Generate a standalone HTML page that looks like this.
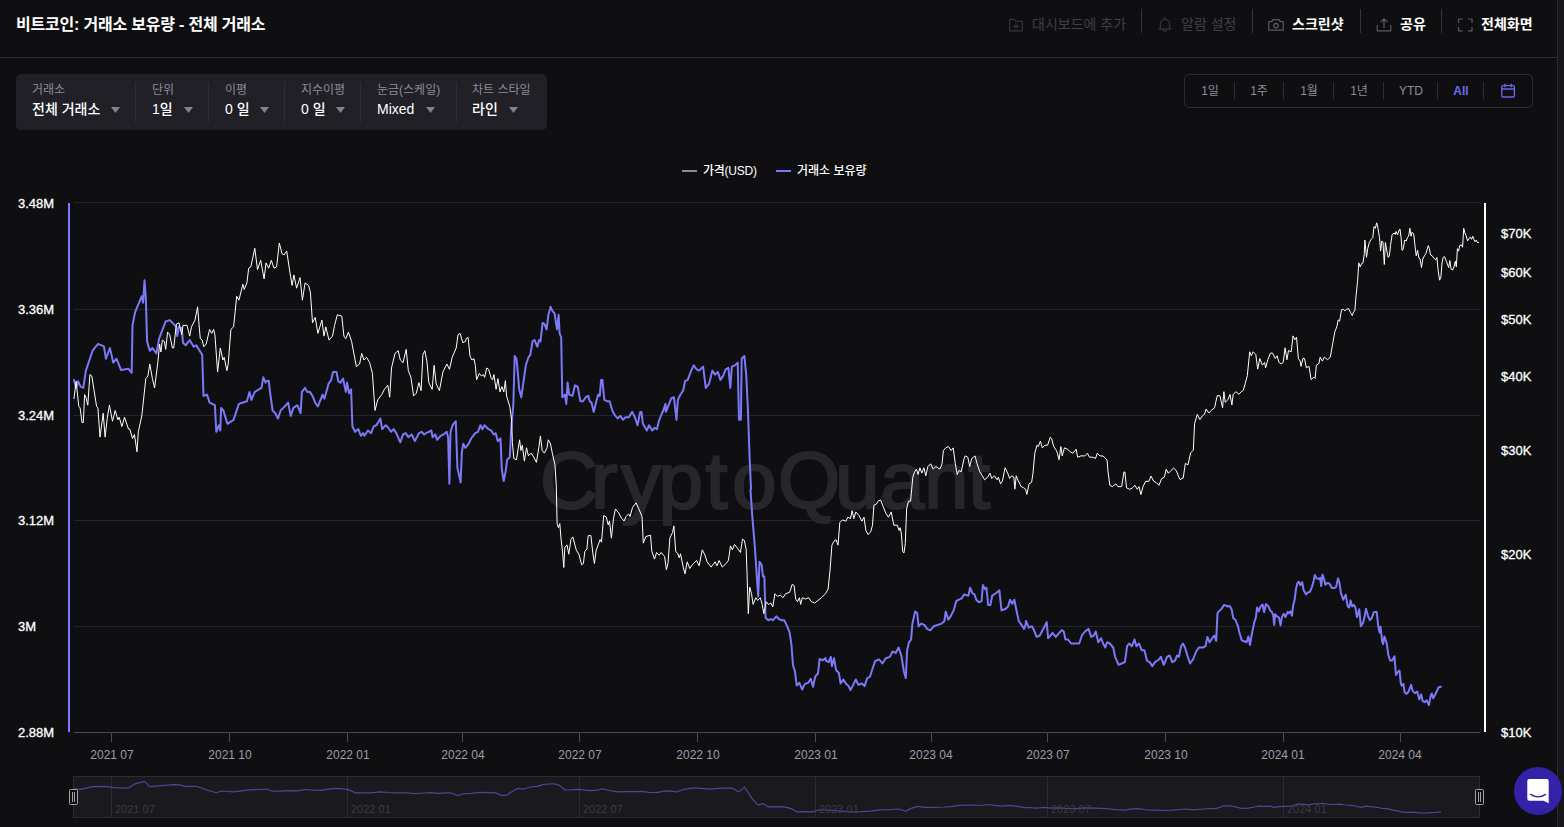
<!DOCTYPE html>
<html lang="ko">
<head>
<meta charset="utf-8">
<title>비트코인: 거래소 보유량 - 전체 거래소</title>
<style>
*{box-sizing:border-box;margin:0;padding:0}
html,body{width:1564px;height:827px;overflow:hidden;background:#0f0f12}
body{position:relative;font-family:"Liberation Sans","Noto Sans CJK KR",sans-serif;color:#fff;font-size:14px}
.abs{position:absolute}
.vscroll{left:1557px;top:0;width:7px;height:827px;background:#17171b;border-left:1px solid #2b2b33}
.hdr-line{left:0;top:57px;width:1557px;height:1px;background:#2c2c34}
.title{left:16px;top:13px;height:24px;line-height:24px;font-size:16px;font-weight:700;color:#fff;white-space:nowrap;letter-spacing:-0.2px}
.act{top:12px;height:24px;line-height:24px;font-size:14px;white-space:nowrap}
.act.dim{color:#3f3f49}
.act.on{color:#fff;font-weight:700}
.vsep{top:9px;width:1px;height:24px;background:#34343d}
.fbox{left:16px;top:74px;width:531px;height:56px;background:#202026;border-radius:5px}
.fl{top:82px;height:16px;line-height:16px;font-size:12px;color:#8c8c9a;white-space:nowrap}
.fv{top:99px;height:20px;line-height:20px;font-size:14px;color:#fff;white-space:nowrap;font-weight:500}
.fsep{top:82px;width:1px;height:40px;background:#2e2e37}
.car{top:107px;width:9px;height:6px;background:#82828f;clip-path:polygon(0 0,100% 0,50% 100%);margin-left:1px}
.tbox{left:1184px;top:74px;width:349px;height:34px;border:1px solid #2c2c34;border-radius:5px}
.tb{top:81px;height:20px;line-height:20px;font-size:12px;color:#8c8c9a;white-space:nowrap;text-align:center}
.tsep{top:82px;width:1px;height:17px;background:#2e2e37}
.yl{-webkit-text-stroke:0.3px #fff;left:18px;width:50px;height:16px;line-height:16px;font-size:13px;color:#fff;white-space:nowrap}
.yr{-webkit-text-stroke:0.3px #fff;left:1501px;width:50px;height:16px;line-height:16px;font-size:13px;color:#fff;white-space:nowrap}
.xl{top:747px;width:80px;height:16px;line-height:16px;font-size:12px;color:#9d9da9;text-align:center;white-space:nowrap}
.lg{top:163px;height:16px;line-height:16px;font-size:12px;color:#fff;white-space:nowrap;font-weight:500;letter-spacing:-0.25px}
.nl{top:802px;height:14px;line-height:14px;font-size:11px;color:#3c3c46;white-space:nowrap}
</style>
</head>
<body>
<div class="abs vscroll"></div>
<div class="abs hdr-line"></div>
<div class="abs title">비트코인: 거래소 보유량 - 전체 거래소</div>

<!-- header actions -->
<div class="abs act dim" style="left:1032px">대시보드에 추가</div>
<div class="abs vsep" style="left:1141px"></div>
<div class="abs act dim" style="left:1181px">알람 설정</div>
<div class="abs vsep" style="left:1252px"></div>
<div class="abs act on" style="left:1292px">스크린샷</div>
<div class="abs vsep" style="left:1360px"></div>
<div class="abs act on" style="left:1400px">공유</div>
<div class="abs vsep" style="left:1441px"></div>
<div class="abs act on" style="left:1481px">전체화면</div>

<!-- filter box -->
<div class="abs fbox"></div>
<div class="abs fl" style="left:32px">거래소</div><div class="abs fv" style="left:32px">전체 거래소</div><div class="abs car" style="left:110px"></div>
<div class="abs fsep" style="left:135px"></div>
<div class="abs fl" style="left:152px">단위</div><div class="abs fv" style="left:152px">1일</div><div class="abs car" style="left:183px"></div>
<div class="abs fsep" style="left:208px"></div>
<div class="abs fl" style="left:225px">이평</div><div class="abs fv" style="left:225px">0 일</div><div class="abs car" style="left:259px"></div>
<div class="abs fsep" style="left:284px"></div>
<div class="abs fl" style="left:301px">지수이평</div><div class="abs fv" style="left:301px">0 일</div><div class="abs car" style="left:335px"></div>
<div class="abs fsep" style="left:360px"></div>
<div class="abs fl" style="left:377px">눈금(스케일)</div><div class="abs fv" style="left:377px">Mixed</div><div class="abs car" style="left:425px"></div>
<div class="abs fsep" style="left:456px"></div>
<div class="abs fl" style="left:472px">차트 스타일</div><div class="abs fv" style="left:472px">라인</div><div class="abs car" style="left:508px"></div>

<!-- time range box -->
<div class="abs tbox"></div>
<div class="abs tb" style="left:1190px;width:40px">1일</div>
<div class="abs tsep" style="left:1234px"></div>
<div class="abs tb" style="left:1239px;width:40px">1주</div>
<div class="abs tsep" style="left:1283px"></div>
<div class="abs tb" style="left:1289px;width:40px">1월</div>
<div class="abs tsep" style="left:1333px"></div>
<div class="abs tb" style="left:1339px;width:40px">1년</div>
<div class="abs tsep" style="left:1383px"></div>
<div class="abs tb" style="left:1391px;width:40px">YTD</div>
<div class="abs tsep" style="left:1437px"></div>
<div class="abs tb" style="left:1441px;width:40px;color:#6b6bf5;font-weight:700">All</div>
<div class="abs tsep" style="left:1483px"></div>

<!-- legend -->
<div class="abs" style="left:682px;top:170px;width:15px;height:2px;background:#8d8d8d"></div>
<div class="abs lg" style="left:703px">가격(USD)</div>
<div class="abs" style="left:776px;top:170px;width:15px;height:2px;background:#7b79f7"></div>
<div class="abs lg" style="left:797px;letter-spacing:0">거래소 보유량</div>

<!-- y labels -->
<div class="abs yl" style="top:196px">3.48M</div>
<div class="abs yl" style="top:302px">3.36M</div>
<div class="abs yl" style="top:408px">3.24M</div>
<div class="abs yl" style="top:513px">3.12M</div>
<div class="abs yl" style="top:619px">3M</div>
<div class="abs yl" style="top:725px">2.88M</div>
<div class="abs yr" style="top:226px">$70K</div>
<div class="abs yr" style="top:265px">$60K</div>
<div class="abs yr" style="top:312px">$50K</div>
<div class="abs yr" style="top:369px">$40K</div>
<div class="abs yr" style="top:443px">$30K</div>
<div class="abs yr" style="top:547px">$20K</div>
<div class="abs yr" style="top:725px">$10K</div>

<!-- x labels -->
<div class="abs xl" style="left:72px">2021 07</div>
<div class="abs xl" style="left:190px">2021 10</div>
<div class="abs xl" style="left:308px">2022 01</div>
<div class="abs xl" style="left:423px">2022 04</div>
<div class="abs xl" style="left:540px">2022 07</div>
<div class="abs xl" style="left:658px">2022 10</div>
<div class="abs xl" style="left:776px">2023 01</div>
<div class="abs xl" style="left:891px">2023 04</div>
<div class="abs xl" style="left:1008px">2023 07</div>
<div class="abs xl" style="left:1126px">2023 10</div>
<div class="abs xl" style="left:1243px">2024 01</div>
<div class="abs xl" style="left:1360px">2024 04</div>

<!-- chart svg -->
<svg class="abs" style="left:0;top:0" width="1564" height="827" viewBox="0 0 1564 827" fill="none">
<g id="grid" stroke="#222228" stroke-width="1" shape-rendering="crispEdges">
<path d="M74 202.5H1480M74 309.5H1480M74 415.5H1480M74 520.5H1480M74 626.5H1480"/>
</g>
<path id="xticks" d="M111.5 733V742M229.5 733V742M347.5 733V742M462.5 733V742M579.5 733V742M697.5 733V742M815.5 733V742M931.5 733V742M1047.5 733V742M1165.5 733V742M1283.5 733V742M1400.5 733V742" stroke="#4a4a55" stroke-width="1" shape-rendering="crispEdges"/>
<path id="xaxis" d="M74 732.5H1480" stroke="#4a4a55" stroke-width="1" shape-rendering="crispEdges"/>
<rect x="68" y="203" width="2" height="529" fill="#7d7bfa"/>
<rect x="1484" y="203" width="2" height="529" fill="#ffffff"/>
<text id="wm" x="540 591 621 658.5 705.5 732 778 835 880 924 968" y="507.5" font-family="Liberation Sans, sans-serif" font-size="80" fill="#26262c" stroke="#26262c" stroke-width="2.2" stroke-linejoin="round">CryptoQuant</text>
<path id="reserve" d="M74 379.9L76.1 387.9L78 381.3L80.6 386.6L83.3 387.9L85.9 370.6L92.6 350.7L97.9 344L101.9 345.4L104 346.7L105.9 358.7L109.9 348L113.3 362.7L116.5 358.7L121.1 370.1L128.5 368.8L131.7 372.8L132.5 325.4L135.1 312.1L141.8 296.2L143.1 302.8L144.5 280.2L145.8 297.5L147.1 341.4L149.8 350.7L152.4 348L156.4 353.4L159.1 338.7L165.7 321.4L169.7 320.1L173.7 324.1L176.4 326.8L177.2 336.1L179 326.8L181.7 328.1L183 342.7L185.7 345.4L189.7 340.1L193.7 346.7L196.3 345.4L202.2 354.7L203.5 395.9L207 394.6L209.6 402.6L214.9 405.2L216.3 431.8L218.9 425.2L220.3 430.5L221.1 407.9L223.4 410.5L227.4 423.8L233.6 419.8L238.9 403.9L246.9 401.2L249.5 391.9L251.4 399.9L254.8 391.9L261.5 387.9L263.3 377.3L265.5 382.6L266 381.3L268.7 380.7L270 391.9L272.6 410.5L275.3 413.2L278 418.5L280.6 410.5L283.3 407.9L285.9 405.2L288.1 402.6L290.7 415.9L293.4 407.9L297.4 405.2L300.6 413.2L301.9 391.9L305.1 387.9L307.2 391.9L309.9 391.9L312.5 395.9L315.2 402.6L317.9 406.5L320.5 399.9L322.6 394.6L324.5 398.6L328.5 383.9L331.2 379.9L333 372L336.5 372L338.3 381.3L340.5 382.6L343.1 378.6L345.8 391.9L347.1 382.6L349 393.2L351.1 389.3L352.4 426.5L355.1 431.8L358.3 429.1L360.9 435.8L363.1 433.1L364.4 435.8L367.9 430.5L371.1 433.1L373.7 426.5L376.4 425.2L380.4 418.5L382.2 429.1L385.7 425.2L388.3 427.8L391 431.8L393.7 429.1L396.3 433.1L400.3 442.4L403 434.5L405.6 433.1L408.3 437.1L411.7 434.5L414.9 441.1L418.9 433.1L421.6 431.8L424.2 434.5L426 433.2L428.7 431.9L431.3 430.5L432.6 437.2L435.3 434.5L437.2 439.8L440.6 435.9L443.3 434.5L446.7 431.9L448.1 437.2L449.4 483.7L450.5 431.9L452.6 425.2L455.8 421.2L457.4 467.8L460.6 482.4L461.9 451.8L463.2 443.8L465.4 447.8L468.6 443.8L471.2 438.5L475.2 433.2L477.9 431.9L480.5 425.2L482.4 429.2L484.5 425.2L488.5 429.2L491.2 430.5L493.8 434.5L495.7 433.2L497.8 441.2L500.5 438.5L501.8 469.1L503.7 481.1L505.8 470.4L507.1 459.8L509.8 457.1L511.2 429.1L513.3 405.2L514.7 356L516.5 358.7L517.9 373.3L519.2 389.3L521.3 397.2L523.2 383.9L525.8 365.3L528.5 357.3L530.4 354.7L532.5 341.4L534.6 340.1L537.3 346.7L539.1 340.1L540.5 341.4L542.6 322.8L544.5 324.1L546.6 329.4L548.4 314.8L550.6 306.8L552.4 310.8L554.6 313.5L557 329.4L558.6 314.8L559.6 333.4L561.2 337.4L562.3 397.2L564.9 394.6L566.3 403.9L567.6 382.6L569.2 394.6L572.4 395.9L575 385.3L577.7 386.6L580.4 401.2L583 401.2L585.7 397.2L588.3 395.9L589.7 401.2L591.5 402.6L593.7 411.9L596.3 401.2L598.2 394.6L599.8 395.9L601.1 379.9L602.4 379.9L604.3 399.9L607 401.2L609.6 401.2L612.3 410.5L614.4 414.5L617.6 418.5L620.3 415.9L622.9 419.8L625.6 417.2L628.8 417.2L632.2 411.9L634.9 417.2L637.5 425.2L640.2 411.9L641.5 411.9L642.9 423.8L646.9 430.5L649 425.2L652.2 430.5L654.8 427.8L657 429.1L658.8 421.2L661.5 414.5L663.3 410.5L665.5 403.9L665.9 411.8L668.6 405.2L671.2 398.5L673.9 397.2L676.5 419.8L677.9 399.8L680.5 394.5L683.2 390.5L685 381.2L687.7 379.9L691.2 370.6L693.8 365.3L696.5 369.3L699.1 370.6L703.1 366.6L705.8 387.9L709 383.9L712.4 370.6L715.1 374.6L717.8 371.9L720.4 379.9L723.1 375.9L725.7 369.3L728.4 367.9L730.3 387.9L731.9 366.6L735 365.3L737.7 362.6L739 419.8L740.9 419.8L741.7 358.6L744.4 356L746.2 374.6L747.8 406.5L749.7 459.7L751 488.9L750.5 490L752.3 516.6L755 548.5L756.9 577.8L758.2 596.4L759.5 561.8L761.6 564.5L763 576.4L764.3 576.4L765.6 617.7L768.3 620.3L770.9 619L772.8 620.3L776.3 616.3L778.9 619L781.6 620.3L784.2 620.3L786.9 625.6L789.6 632.3L791.4 644.3L793 665.5L794.9 670.9L796.7 685.5L799.4 682.8L802.1 689.5L804.7 684.1L808.2 682.8L810.8 678.8L813 686.8L815.4 676.2L818 673.5L819.6 658.9L822.8 660.2L825.5 658.1L826 660.9L828.7 662.2L830.8 656.9L831.9 666.2L834 658.2L836.1 670.2L838.8 672.8L840.6 683.5L843.3 679.5L845.9 683.5L848.6 686.1L850.5 690.1L852.6 686.1L855.8 679.5L858.4 684.8L861.9 683.5L864.6 686.1L867.2 678.1L869.9 676.8L872.5 668.8L875.2 660.9L879.2 659.5L882.4 663.5L885.8 658.2L889.8 656.9L892.5 651.5L895.7 652.9L898.6 647.6L901.3 655.5L903.9 671.5L905.8 678.1L907.1 650.2L909 642.2L911.1 639.6L912.4 623.6L915.1 611.6L917.2 613L918.6 626.3L921.2 623.6L924.4 624.9L927.1 628.9L930.3 630.3L933.7 626.3L937.7 624.9L941.7 623.6L944.4 621L945.7 611.6L948.3 619.6L951 615.6L953.7 610.3L956.3 601L959 599.7L961.6 598.4L964.3 594.4L968.3 595.7L970.1 587.7L972.3 593L974.4 594.4L976.3 599.7L978.9 602.3L981.6 601L982.9 585.1L985 589L986.4 587.7L988.2 605L990.4 605L992.2 595.7L996.2 593L999.4 590.4L1001.5 610.3L1005.5 609L1008.2 606.3L1010 599.7L1012.2 603.7L1014.3 599.7L1017 613L1018.8 621L1021.5 624.9L1024.1 628.9L1025.7 624.1L1026 620.9L1028.7 627.6L1031.9 626.2L1034 630.2L1036.6 636.9L1039.8 635.5L1042.5 630.2L1044.6 626.2L1046.7 622.2L1048.1 638.2L1050.5 635.5L1052.6 632.9L1055.8 636.9L1059.2 632.9L1061.9 630.2L1063.8 631.5L1065.4 639.5L1068 639.5L1071.2 643.5L1075.2 643.5L1079.2 643.5L1081.9 635.5L1085 631.5L1088.5 628.9L1091.2 636.9L1093.8 635.5L1095.7 631.5L1098.3 642.2L1101 638.2L1103.1 643.5L1105.3 647.5L1107.1 642.2L1109.8 643.5L1113.2 647.5L1115.1 656.8L1118.6 664.8L1121.7 663.5L1124.9 662.1L1127.1 646.2L1129.2 643.5L1131.9 646.2L1134.5 639.5L1136.4 646.2L1139 643.5L1141.7 650.2L1144.4 650.2L1147 660.8L1149.7 662.1L1152.3 666.1L1155 662.1L1159 659.5L1160.8 656.8L1163.8 664.8L1167 656.8L1169.6 655.5L1172.3 662.1L1174.9 660.8L1177.1 655.5L1178.9 656.8L1181.1 646.2L1182.9 643.5L1185 647.5L1188.2 658.1L1190.1 663.5L1193 659.5L1196.2 651.5L1198.9 647.5L1202.9 647.5L1205.5 646.2L1207.4 636.9L1209.5 642.2L1212.2 638.2L1214.3 635.5L1216.2 640.9L1217.5 612.9L1221.5 608.9L1224.1 604.9L1226 605.6L1227.4 606.4L1229.7 606L1231.6 609.3L1233.2 618L1235.5 620L1237.8 625.8L1239.7 633.5L1241.7 640.3L1244.2 641.2L1246.7 642.2L1248.4 636.4L1250 645.1L1251.9 633.5L1254.4 621.9L1255.8 618L1257.1 607.4L1258.7 611.3L1260.6 606.4L1262.6 604.5L1264.1 612.2L1266 604.1L1268.4 606.4L1270.3 610.7L1271.8 611.8L1273.2 615.1L1274.2 624.8L1275.1 614.2L1277.1 616.5L1279 617.6L1280.5 625.4L1281.9 617.1L1283.8 613.8L1285.4 617.1L1287.7 611.8L1289.2 613.2L1290.6 611.3L1292 615.7L1293.1 605.5L1294.5 600.6L1296 589L1297.4 583.2L1298.9 581.7L1300.3 585.1L1302.2 582.2L1303.6 590L1306.1 594.4L1308 592.5L1309.9 591.9L1311.9 587.1L1313.8 580.3L1314.8 575.1L1316.7 578.4L1319 579L1320.2 577.8L1321.2 586.1L1322.5 574.5L1324.1 579.3L1325.4 584.8L1327.9 582.8L1329.9 584.2L1331.8 588L1334.1 588L1336.1 587.1L1338 578.4L1339.5 583.2L1340.9 592.9L1343.2 599.7L1345.7 594.8L1347.7 606.4L1349.2 607.4L1350.6 600.6L1352.1 606.4L1354 604.9L1355.4 607.4L1356.9 617.1L1359.3 609.3L1360.8 626.2L1363.1 622.9L1364.7 616.1L1366 608.7L1368 616.1L1369.9 620L1371.8 618L1373.8 612.2L1376.7 611.8L1378.2 625.8L1379.6 632.5L1380.5 626.7L1382.1 641.2L1383.1 644.1L1384.4 636.4L1386.7 643.2L1388.3 654.8L1390.2 660.6L1392.1 660.6L1394.5 656.3L1396 675.1L1397.6 672.2L1399.5 670.6L1400.9 683.8L1401.8 685.7L1403.4 683.8L1404.7 692.5L1406.7 693.8L1408.6 691.5L1411.1 684.8L1412.5 690.6L1415 693.1L1417.3 691.5L1419.2 699.3L1421.2 694.4L1422.7 701.2L1424.6 702.2L1426.6 700.2L1428.9 705.1L1430.8 695.4L1431.8 693.5L1433.2 698.3L1435.7 693.5L1438.6 687.3L1440.9 686.7" stroke="#7b79f7" stroke-width="2" stroke-linejoin="round" stroke-linecap="round"/>
<path id="price" d="M74 398.6L76.1 381.3L78.8 406.5L80.1 407.9L82 422.5L83.3 422.5L84.6 394.6L85.9 397.2L87.8 405.2L89.9 374.6L91.8 376L93.9 389.3L96.6 406.5L97.9 407.9L100 437.1L103.2 413.2L105.1 437.1L107.2 418.5L109.4 405.2L112.5 421.2L115.2 410.5L117.9 419.8L119.2 417.2L121.9 426.5L124.5 417.2L128.5 429.1L129.8 429.1L132.5 438.5L134.4 434.5L137 451.8L138.3 431.8L141.8 415.9L145.8 378.6L147.9 376L149.8 364L152.4 378.6L154.6 387.9L157.8 362.7L159.6 344L160.9 352L162.3 340.1L164.4 341.4L165.7 349.4L167.6 332.1L169.7 334.7L172.4 348L173.7 348L176.4 324.1L179 322.8L181.7 334.7L183 325.4L187 325.4L189.7 336.1L191.5 326.8L195 320.1L197.6 306.8L199 324.1L200.3 338.7L202.2 340.1L203.8 346.7L206.2 344L209.6 329.4L211.7 333.4L213.6 329.4L214.9 334.7L217.6 372L220.3 348L222.9 360L224.2 357.3L226.9 370.6L228.2 364L230.9 329.4L233.6 326.8L236.7 296.2L238.9 300.2L242.9 284.2L244.2 289.5L246.9 282.9L248.7 268.2L250.8 266.9L254.8 248.3L257.5 269.6L260.7 260.3L264.1 278.9L266 262.9L268.7 268.2L271.3 260.3L274 268.2L276.6 266.9L279.3 243L282 253.6L284.1 254.9L286.7 251L289.9 272.2L292.1 285.5L293.9 274.9L296.6 288.2L300 277.6L302.4 300.2L305.1 282.9L308.6 285.5L310.4 292.2L312.5 322.8L315.2 317.4L317.9 333.4L321.9 320.1L324 336.1L325.8 326.8L329 340.1L332.5 336.1L334.6 325.4L337.3 314.8L341.8 316.1L343.9 336.1L345.8 338.7L348.4 332.1L351.6 341.4L355.1 360L356.4 366.6L359.6 364L361.7 353.4L363.9 360L366.5 357.3L369.7 362.7L372.4 373.3L375 410.5L377.7 399.9L381.7 394.6L384.4 389.3L387.8 385.3L389.7 397.2L391.5 368L395 353.4L398.2 350.7L400.3 360L403 362.7L406.2 349.4L408.3 370.6L410.9 377.3L413.6 395.9L416.3 393.2L418.9 382.6L421.1 390.6L422.9 354.7L424.8 350.7L426.9 361.3L428.8 382.6L432.2 389.3L434.1 365.3L436.2 383.9L439.4 390.6L442.9 372L446.9 364L449.5 369.3L452.2 357.3L456.2 348L458 334.7L460.1 333.4L462.8 342.7L465.5 341.4L466 338.7L468.1 337.4L470 356L471.9 360L474 358.7L475.3 365.3L476.6 379.9L479.3 373.3L481.4 376L483.3 374.6L484.6 377.3L486.7 368L488.6 369.3L491.3 378.6L492.6 379.9L493.9 374.6L496.1 389.3L497.9 378.6L500 391.9L501.9 386.6L503.8 391.9L505.4 380.7L506.6 396L509.8 406.6L511.6 419.9L512.4 442.5L513.8 458.5L516.4 459.8L519.6 439.8L520.9 450.5L522.3 445.2L524.4 461.1L526.5 447.8L528.4 455.8L531.1 453.1L533.7 457.1L536.4 462.4L539 446.5L540.4 435.9L542.2 450.5L544.4 453.1L547 447.8L548.3 439.8L550.5 443.8L552.3 453.1L555 465.1L556.3 486.4L557.1 523.6L558.4 527.6L559.8 523.6L561.1 539.6L562.4 550.2L563.8 567.5L564.8 547.6L567 544.9L568.8 554.2L570.9 539.6L572.8 536.9L576.3 550.2L578.9 554.2L581.6 564.8L583.4 563.5L584.8 551.5L586.9 548.9L588.2 535.6L590.9 535.6L592.8 552.9L594.4 563.5L596.2 550.2L600.2 539.6L601.5 542.2L603.7 515.6L606.3 517L608.2 524.9L609.5 521L611.4 538.2L613.5 518.3L615.4 509L618.8 513L621.5 518.3L624.1 521L626 516.6L628.7 513.9L630 516.6L632.6 507.3L636.1 502.8L639.3 509.9L642 516.6L643.3 543.2L645.9 536.5L650.5 535.2L651.8 551.2L654.5 559.1L656.6 552.5L659.2 555.2L661.1 552.5L664.6 556.5L666.4 569.8L668 563.1L669.9 537.9L672.5 532.6L673.9 525.9L675.7 551.2L677.9 553.8L679.2 557.8L680.5 553.8L683.2 567.1L685 573.8L687.2 561.8L689.8 568.5L692.5 564.5L696.5 560.5L699.1 565.8L702.3 549.8L705 555.2L707.1 561.8L711.1 567.1L715.1 561.8L717 565.8L719.1 560.5L722.3 567.1L726.5 563.1L728.4 560.5L730.5 545.9L732.4 549.8L734.5 544.5L737.7 548.5L740.4 552.5L742.5 539.2L744.4 540.5L746.2 549.8L747 572.4L748.3 613.7L749.7 587.1L751.5 593.7L753.1 604.4L755.8 597.7L757.6 600.4L760.3 597.7L762.2 604.4L763.8 613.7L766.2 601.7L768.3 604.4L770.9 603L772.8 607L774.9 593.7L777.6 596.4L780.3 595.1L782.9 597.7L785.6 593.7L789.6 592.4L792.2 584.4L794.1 585.7L795.7 599L797.5 601.7L799.4 597.7L800.7 604.4L802.3 597.7L805.5 599L808.7 597.7L811.4 601.7L814.8 603L818 600.4L821.5 597.7L825.5 593.7L826 593L828.1 589L830 570.4L831.9 545.2L834 541.2L836.1 539.8L838 545.2L839.8 522.6L842.5 519.9L845.9 521.2L847.8 517.2L850.5 518.6L852.1 510.6L853.9 518.6L855.8 511.9L859.2 515.9L861.9 521.2L864 517.2L865.9 530.5L868 534.5L870.7 531.9L872.5 525.2L873.9 505.3L876.5 503.9L877.9 501.3L880.5 499.9L883.2 506.6L885.8 513.2L888.5 517.2L891.2 511.9L893.8 525.2L897.3 525.2L899.1 530.5L900 527.7L901.3 533L902.7 551.6L904 552.9L905.3 543.6L906.6 509L908.5 501.1L910.6 501.1L912.8 477.1L914.6 471.8L916.5 469.1L918.1 474.5L919.9 467.8L921.8 473.1L923.9 467.8L925.8 475.8L927.9 466.5L930.6 463.8L933.2 469.1L935.9 466.5L939.9 469.1L942 463.8L943.4 450.5L945.7 447.9L948.4 446.5L951.1 450.5L953.2 447.9L955.3 463.8L957.2 474.5L959 470.5L961.2 471.8L963.8 459.8L965.2 455.9L967.8 457.2L969.7 466.5L971.8 458.5L975 455.9L977.1 463.8L979.8 471.8L982.4 475.8L984.6 479.8L987.8 477.1L989.9 473.1L991.8 478.5L994.4 475.8L997.1 479.8L998.4 477.1L1000.5 483.8L1002.4 481.1L1005.1 467.8L1007.7 473.1L1009.6 478.5L1011.7 475.8L1013.8 477.1L1014.9 489.1L1016.2 475.8L1018.4 481.1L1021 486.4L1023.7 487.8L1025.5 489.1L1026.9 494.4L1029 483.8L1031.6 482.4L1033 473.1L1034.8 453.2L1037 445.2L1038.3 446.5L1040.4 441.2L1042.3 447.9L1044.9 445.2L1047.6 445.2L1050.3 437.2L1051.6 438.6L1053.7 446.5L1056.4 450.5L1057.4 453.2L1059 459.8L1060.9 446.5L1062.2 455.9L1064.4 447.9L1067.6 449.2L1070.2 451.9L1072.9 453.2L1076.1 449.2L1077.7 457.2L1080.9 455.9L1084.8 455.9L1087.5 453.2L1089.4 457.2L1092.8 457.2L1095.5 458.5L1097.3 453.2L1100 455.9L1103.1 456L1107.1 460L1107.9 470.6L1109.8 485.3L1112.4 486.6L1115.9 483.9L1117.8 486.6L1121.7 486.6L1123.9 472L1124.9 472L1126.5 487.9L1129.7 489.3L1132.4 487.9L1135 485.3L1137.2 489.3L1139 486.6L1140.9 494.6L1143 486.6L1145.7 481.3L1148.9 481.3L1151 476L1153.7 481.3L1156.3 482.6L1159 485.3L1161.6 478.6L1164.3 477.3L1166.2 469.3L1168.3 473.3L1170.9 470.6L1173.6 468L1176.3 470.6L1178.9 477.3L1180 479.5L1183.2 478.1L1185.3 463.5L1188 464.8L1190.6 452.9L1193.3 450.2L1194.6 423.6L1197.3 414.3L1199.9 419.6L1202.6 415.6L1204.5 414.3L1206.1 409L1208.7 413L1211.4 410.3L1214.6 407.7L1217.2 395.7L1219.9 395.7L1222.6 407.7L1223.9 391.7L1225.2 402.3L1227.9 399.7L1230 394.4L1231.9 405L1233.2 394.4L1235.9 391.7L1239 394.4L1241.2 391.7L1243.3 390.4L1245.2 383.7L1247.3 375.7L1249.7 351.8L1251.3 355.8L1253.1 351.8L1255.8 354.5L1257.7 369.1L1259.8 358.5L1262.4 365.1L1264.6 362.4L1265.6 367.8L1267.8 359.8L1270.4 353.1L1272.6 353.1L1275.2 358.5L1277.1 355.8L1278.9 362.4L1281.1 363.8L1283.2 362.4L1285.1 347.8L1286.9 359.8L1288.5 350.5L1291.2 351.8L1293 335.9L1294.9 339.8L1296.5 337.2L1298.4 358.5L1300.2 361.1L1301 366.4L1302.9 358.5L1304.5 358.5L1306.3 367.8L1309 366.4L1311.1 379.7L1313.8 377.1L1315.1 378.4L1316.4 365.1L1318.8 363.8L1320.2 357.1L1322.3 361.1L1324.4 357.1L1327.6 359.8L1330.3 357.1L1332.9 342.5L1334.8 331.9L1336.9 326.5L1338.2 319.9L1339.6 321.2L1341.4 310.6L1341 310.1L1343.4 309.3L1344.9 310.9L1346.5 309.3L1348.6 308.5L1350.4 312.4L1352.3 315.6L1353.6 311.7L1354.8 310.9L1355.9 297.5L1357.5 281.8L1358.8 262.9L1360.2 266.8L1361.5 263.7L1363 262.9L1364.3 253.5L1364.9 240.1L1366.5 257.4L1367.7 248.7L1369.3 242.5L1371.2 239.3L1372.8 237.7L1374 226.7L1375.3 228.3L1376.7 222.8L1378 228.3L1379.5 237.7L1380.6 251.1L1381.9 240.9L1383 242.5L1384.3 264.5L1385.4 242.5L1386.9 251.1L1388.2 257.4L1389.4 255.8L1390.5 245.6L1392.1 234.6L1394.2 233L1395.3 234.6L1396 231.5L1397.6 234.6L1399.2 229.9L1400 229.1L1401.1 237.7L1402 250.3L1403.1 249.5L1404.7 240.1L1406.3 240.9L1407.4 237.7L1408.6 236.2L1409.9 228.3L1411 236.2L1412.1 232.2L1413.7 233.8L1414.9 244.8L1416.2 255.8L1417.6 250.3L1418.9 258.2L1420.1 259L1421.5 267.6L1422.8 259L1424.4 255.8L1425.9 253.5L1428.3 245.6L1429.4 248.7L1430.6 255L1432.2 255.8L1433.8 258.2L1435.7 259.8L1436.9 257.4L1438.2 270.8L1439.6 280.2L1440.9 277.1L1442 262.9L1443.2 257.4L1444.5 256.6L1446.4 261.3L1448.7 267.6L1449.8 260.5L1451.1 269.2L1452.7 270L1454.2 266L1455.3 261.3L1456.3 266.8L1457.4 248.7L1458.6 251.1L1459.7 245.6L1461.3 244.8L1462.6 247.2L1463.7 228.3L1464.9 233L1466 235.4L1467.6 240.9L1469.2 238.5L1470.4 237L1471.5 239.3L1472.8 236.2L1473.9 239.3L1475 241.7L1476.2 240.1L1477.5 242.5L1478.6 242.5" stroke="#ffffff" stroke-width="1.0" stroke-linejoin="round" stroke-linecap="round"/>
<rect x="73.5" y="776.5" width="1406" height="41" fill="#19191e" stroke="#2b2b33" stroke-width="1"/>
<path d="M111.5 777V817M347.5 777V817M579.5 777V817M815.5 777V817M1047.5 777V817M1283.5 777V817" stroke="#2b2b33" stroke-width="1" shape-rendering="crispEdges"/>
<path id="navline" d="M74 788.9L80.6 789.4L92.6 786.7L104 786.4L113.3 787.6L128.5 788.1L135.1 783.8L144.5 781.4L149.8 786.7L159.1 785.8L173.7 784.7L179 784.9L185.7 786.3L196.3 786.3L207 790L216.3 792.8L221.1 791L233.6 791.9L249.5 789.8L261.5 789.5L266 789L272.6 791.2L280.6 791.2L288.1 790.6L297.4 790.8L305.1 789.5L312.5 790.1L320.5 790.4L328.5 789.2L336.5 788.3L343.1 788.8L349 789.9L355.1 792.8L363.1 792.9L371.1 792.9L380.4 791.8L388.3 792.5L396.3 792.9L405.6 792.9L414.9 793.5L424.2 793L431.3 792.7L437.2 793.4L446.7 792.8L450.5 792.8L457.4 795.5L463.2 793.7L471.2 793.3L480.5 792.3L488.5 792.6L495.7 792.9L501.8 795.6L507.1 794.9L513.3 790.8L517.9 788.4L523.2 789.2L530.4 787L537.3 786.4L542.6 784.6L548.4 784L554.6 783.9L559.6 785.4L564.9 790L569.2 790L577.7 789.4L585.7 790.2L591.5 790.6L598.2 790L602.4 788.9L609.6 790.5L617.6 791.8L625.6 791.7L634.9 791.7L641.5 791.3L649 792.3L657 792.6L663.3 791.2L668.6 790.8L676.5 791.9L683.2 789.7L691.2 788.2L699.1 788.2L709 789.2L717.8 788.3L725.7 788.1L731.9 787.9L739 791.9L744.4 787.1L749.7 794.9L752.3 799.1L758.2 805.1L763 803.6L768.3 806.9L776.3 806.6L784.2 806.9L791.4 808.7L796.7 811.8L804.7 811.7L813 811.9L819.6 809.8L826 810L831.9 810.4L838.8 810.9L845.9 811.7L852.6 811.9L861.9 811.7L869.9 811.2L879.2 809.9L889.8 809.7L898.6 809L905.8 811.3L911.1 808.4L917.2 806.4L924.4 807.3L933.7 807.4L944.4 807L951 806.6L959 805.4L968.3 805.1L974.4 805L981.6 805.5L986.4 804.5L992.2 805.1L1001.5 806.2L1010 805.4L1017 806.4L1024.1 807.6L1028.7 807.5L1036.6 808.2L1044.6 807.4L1050.5 808.1L1059.2 807.9L1065.4 808.4L1075.2 808.7L1085 807.8L1093.8 808.1L1101 808.3L1107.1 808.6L1115.1 809.7L1124.9 810.1L1131.9 808.9L1139 808.7L1147 810L1155 810.1L1163.8 810.3L1172.3 810.1L1178.9 809.7L1185 809L1193 809.9L1202.9 809L1209.5 808.6L1216.2 808.5L1224.1 805.8L1229.7 805.9L1235.5 806.9L1241.7 808.4L1248.4 808.1L1254.4 807L1258.7 806.2L1264.1 806.3L1270.3 806.2L1274.2 807.3L1279 806.7L1283.8 806.4L1289.2 806.4L1293.1 805.8L1297.4 804.1L1302.2 804.1L1308 804.8L1313.8 803.9L1319 803.8L1322.5 803.5L1327.9 804.1L1334.1 804.5L1339.5 804.1L1345.7 805L1350.6 805.4L1355.4 806L1360.8 807.4L1366 806.1L1371.8 806.8L1378.2 807.3L1382.1 808.5L1386.7 808.6L1392.1 809.9L1397.6 810.8L1401.8 811.8L1406.7 812.4L1412.5 812.2L1419.2 812.8L1424.6 813.1L1430.8 812.6L1435.7 812.4L1440.9 811.9" stroke="#4a4895" stroke-width="1.2" stroke-linejoin="round"/>
<g font-family="Liberation Sans, sans-serif" font-size="11" fill="#3b3b44">
<text x="115" y="813">2021 07</text><text x="351" y="813">2022 01</text><text x="583" y="813">2022 07</text><text x="819" y="813">2023 01</text><text x="1051" y="813">2023 07</text><text x="1287" y="813">2024 01</text>
</g>
<g stroke="#a2a2ad" stroke-width="1">
<rect x="69.5" y="789.5" width="8" height="15" rx="1" fill="#0f0f12"/><path d="M72.5 792V802M74.5 792V802" shape-rendering="crispEdges"/>
<rect x="1475.5" y="789.5" width="8" height="15" rx="1" fill="#0f0f12"/><path d="M1478.5 792V802M1480.5 792V802" shape-rendering="crispEdges"/>
</g>
<g id="icons" fill="none" stroke-linecap="round" stroke-linejoin="round">
<g stroke="#34343d" stroke-width="1.2">
<path d="M1009.6 19.4h4.6l1.6 2h6.6v9.4h-12.8z"/><path d="M1013.4 26.2h5.2M1016 23.6v5.2"/>
<path d="M1159 29.2h12M1160.4 29.2v-5.2a4.6 4.6 0 0 1 9.2 0v5.2M1165 17.6v1.6M1163.6 30.4a1.5 1.5 0 0 0 2.8 0"/>
</g>
<g stroke="#5a5a66" stroke-width="1.2">
<path d="M1268.8 21.6h3l1.2-2h6l1.2 2h3v8.6h-14.4z"/><circle cx="1276" cy="25.6" r="2.3"/>
<path d="M1377.2 25.4v5.4h13.6v-5.4M1384 27.4v-8.6M1381 21.6l3-3 3 3"/>
<path d="M1458.6 22.4v-3.4h3.6M1468.4 19h3.6v3.4M1472 27.4v3.4h-3.6M1462.2 30.8h-3.6v-3.4"/>
</g>
<g stroke="#6b69f0" stroke-width="1.3">
<rect x="1501.8" y="85.6" width="12.6" height="11.4" rx="1"/><path d="M1501.8 89h12.6M1505 84.2v2.6M1511.2 84.2v2.6"/>
</g>
</g>
</svg>

<!-- chat button -->
<div class="abs" style="left:1514px;top:767px;width:48px;height:48px;border-radius:50%;background:#3321a8"></div>
<svg class="abs" style="left:1514px;top:767px" width="48" height="48" viewBox="0 0 48 48"><path d="M15.3 12h17.4a2 2 0 0 1 2 2v22.2l-5.2-2.4H15.3a2 2 0 0 1-2-2V14a2 2 0 0 1 2-2z" fill="#fff"/><path d="M16.6 27.4q7.6 5 15 0" stroke="#3321a8" stroke-width="1.4" fill="none" stroke-linecap="round"/></svg>
</body>
</html>
